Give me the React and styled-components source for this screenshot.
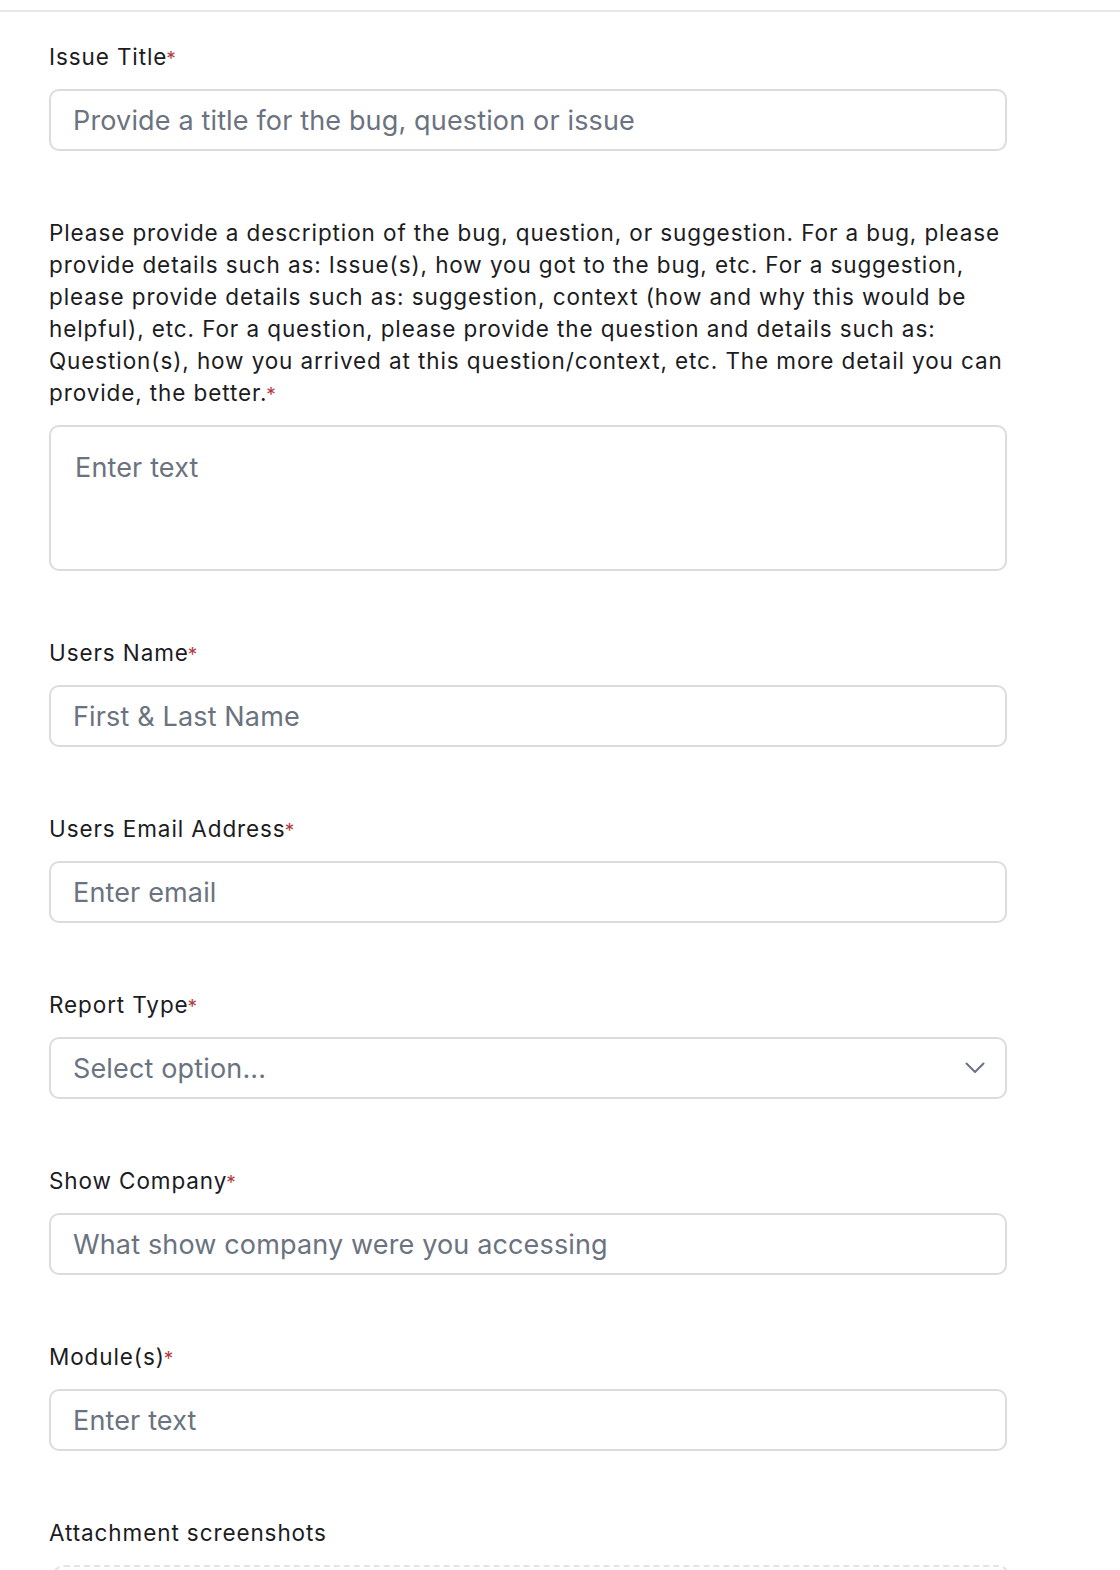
import React from "react";
import styled, { createGlobalStyle } from "styled-components";

const GlobalStyle = createGlobalStyle`
  html, body {
    margin: 0;
    padding: 0;
    background: #ffffff;
    overflow: hidden;
  }
  body {
    font-family: Inter, "Noto Sans", "Liberation Sans", sans-serif;
    color: #232326;
  }
`;

const Page = styled.div`
  border-top: 2px solid #e6e6e8;
  margin-top: 10px;
  padding: 29px 0 0 49px;
`;

const Form = styled.form`
  width: 958px;
  display: flex;
  flex-direction: column;
`;

const Field = styled.div`
  display: flex;
  flex-direction: column;
  margin-bottom: 66px;
`;

const Label = styled.label`
  font-size: 22.5px;
  line-height: 32px;
  font-weight: 400;
  letter-spacing: 0.9px;
  color: #1c1c1f;
  margin-bottom: 16px;
  white-space: nowrap;
`;

const Required = styled.span`
  color: #b23b3b;
  font-size: 19px;
  line-height: 1;
  margin-left: -1px;
`;

const inputBase = `
  box-sizing: border-box;
  width: 100%;
  border: 2px solid #dcdce0;
  border-radius: 10px;
  background: #ffffff;
  font-family: Inter, "Noto Sans", "Liberation Sans", sans-serif;
  font-size: 27px;
  letter-spacing: 0.15px;
  color: #232326;
  outline: none;
  &::placeholder {
    color: #6b7280;
    opacity: 1;
  }
`;

const Input = styled.input`
  ${inputBase}
  height: 62px;
  padding: 0 22px;
`;

const TextArea = styled.textarea`
  ${inputBase}
  height: 146px;
  padding: 24px 24px;
  resize: none;
  line-height: 34px;
`;

const SelectBox = styled.div`
  ${inputBase}
  height: 62px;
  padding: 0 20px 0 22px;
  display: flex;
  align-items: center;
  justify-content: space-between;
  color: #6b7280;
`;

const Chevron = styled.svg`
  width: 20px;
  height: 12px;
`;

const Dropzone = styled.div`
  box-sizing: border-box;
  width: 100%;
  height: 140px;
  border: 2px dashed #e4e4e8;
  border-radius: 12px;
  margin-left: 3px;
`;

const Req = () => <Required>*</Required>;

export default function App() {
  return (
    <>
      <GlobalStyle />
      <Page>
        <Form>
          <Field>
            <Label>
              Issue Title<Req />
            </Label>
            <Input placeholder="Provide a title for the bug, question or issue" />
          </Field>
          <Field>
            <Label>
              Please provide a description of the bug, question, or suggestion. For a bug, please
              <br />
              provide details such as: Issue(s), how you got to the bug, etc. For a suggestion,
              <br />
              please provide details such as: suggestion, context (how and why this would be
              <br />
              helpful), etc. For a question, please provide the question and details such as:
              <br />
              Question(s), how you arrived at this question/context, etc. The more detail you can
              <br />
              provide, the better.<Req />
            </Label>
            <TextArea placeholder="Enter text" />
          </Field>
          <Field>
            <Label>
              Users Name<Req />
            </Label>
            <Input placeholder="First & Last Name" />
          </Field>
          <Field>
            <Label>
              Users Email Address<Req />
            </Label>
            <Input placeholder="Enter email" />
          </Field>
          <Field>
            <Label>
              Report Type<Req />
            </Label>
            <SelectBox>
              <span>Select option...</span>
              <Chevron viewBox="0 0 20 12" fill="none" stroke="#6b7280" strokeWidth="2" strokeLinecap="round" strokeLinejoin="round">
                <path d="M1.5 1.5L10 10l8.5-8.5" />
              </Chevron>
            </SelectBox>
          </Field>
          <Field>
            <Label>
              Show Company<Req />
            </Label>
            <Input placeholder="What show company were you accessing" />
          </Field>
          <Field>
            <Label>
              Module(s)<Req />
            </Label>
            <Input placeholder="Enter text" />
          </Field>
          <Field>
            <Label>Attachment screenshots</Label>
            <Dropzone />
          </Field>
        </Form>
      </Page>
    </>
  );
}
